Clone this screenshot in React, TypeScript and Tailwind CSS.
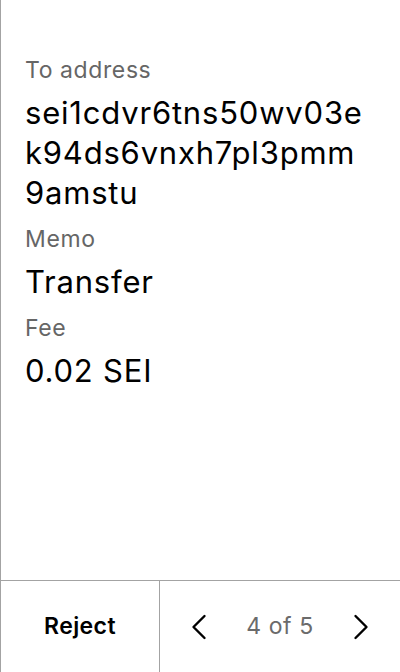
import React from 'react';

const fields = [
  { label: 'To address', lines: ['sei1cdvr6tns50wv03e', 'k94ds6vnxh7pl3pmm', '9amstu'] },
  { label: 'Memo', lines: ['Transfer'] },
  { label: 'Fee', lines: ['0.02 SEI'] },
];

function Chevron({ dir }: { dir: 'left' | 'right' }) {
  return (
    <svg width="16" height="26" viewBox="0 0 16 26" fill="none" className="shrink-0">
      <path
        d={dir === 'left' ? 'M13.5 2 L2.5 13 L13.5 24' : 'M2.5 2 L13.5 13 L2.5 24'}
        stroke="#000"
        strokeWidth="2.4"
        strokeLinecap="round"
        strokeLinejoin="round"
      />
    </svg>
  );
}

export default function App() {
  return (
    <div
      className="w-[400px] h-[672px] flex flex-col bg-white border-l border-[#a3a3a3] text-black"
      style={{ fontFamily: 'Inter, "Noto Sans", sans-serif' }}
    >
      {/* Details */}
      <div className="flex-1 flex flex-col gap-[11px] pt-[55px] px-6">
        {fields.map(f => (
          <div key={f.label} className="flex flex-col">
            <div className="text-[23px] leading-[30px] tracking-[0.6px] text-[#666]">{f.label}</div>
            <div className="mt-[8px] text-[31px] leading-[40px] tracking-[0.8px]">
              {f.lines.map(l => (
                <div key={l} className="whitespace-nowrap">{l}</div>
              ))}
            </div>
          </div>
        ))}
      </div>

      {/* Footer */}
      <div className="h-[92px] flex border-t border-[#a3a3a3]">
        <button className="w-[159px] flex items-center justify-center border-r border-[#a3a3a3] text-[23px] tracking-[0.4px] font-semibold">
          Reject
        </button>
        <div className="flex-1 flex items-center justify-between px-[31px]">
          <Chevron dir="left" />
          <span className="text-[23px] tracking-[0.6px] text-[#6b6b6b]">4 of 5</span>
          <Chevron dir="right" />
        </div>
      </div>
    </div>
  );
}
